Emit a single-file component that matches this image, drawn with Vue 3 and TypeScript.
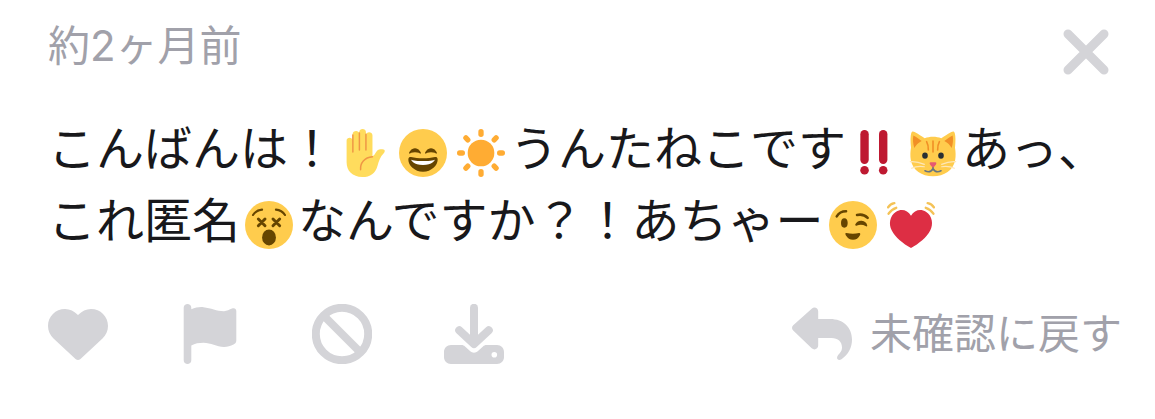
<script setup lang="ts">
import { ref } from 'vue'

type EmojiName = 'hand' | 'smile' | 'sun' | 'bangbang' | 'cat' | 'dizzy' | 'wink' | 'heartbeat'

interface Part {
  text?: string
  emoji?: EmojiName
  label?: string
}

const parts: Part[] = [
  { text: 'こんばんは！' },
  { emoji: 'hand', label: '✋' },
  { emoji: 'smile', label: '😄' },
  { emoji: 'sun', label: '☀️' },
  { text: 'うんたねこです' },
  { emoji: 'bangbang', label: '‼️' },
  { emoji: 'cat', label: '🐱' },
  { text: 'あっ、' },
  { text: 'これ匿名' },
  { emoji: 'dizzy', label: '😵' },
  { text: 'なんですか？！あちゃー' },
  { emoji: 'wink', label: '😉' },
  { emoji: 'heartbeat', label: '💓' },
]

const sunAngles = [0, 45, 90, 135, 180, 225, 270, 315]
const visible = ref(true)
</script>

<template>
  <article v-if="visible" class="card">
    <header class="header">
      <time class="time">約2ヶ月前</time>
      <button class="close" type="button" aria-label="閉じる" @click="visible = false">
        <svg viewBox="0 0 48 48" class="close-icon">
          <path d="M6 6L42 42M42 6L6 42" class="cross" />
        </svg>
      </button>
    </header>

    <p class="message">
      <template v-for="(part, i) in parts" :key="i"
        ><span v-if="part.text">{{ part.text }}</span
        ><svg v-else class="emoji" viewBox="0 0 36 36" role="img" :aria-label="part.label">
          <g v-if="part.emoji === 'hand'">
            <path
              fill="#FFDC5D"
              d="M4.2 8.6C4.2 5.800 8.700 5.800 8.700 8.600V4C8.700 .800 13.700 .800 13.700 3.600V2.300C13.700 -.700 18.700 -.700 18.700 2.300V4.500C18.700 1.700 23.600 1.700 23.600 4.600V20.500C24.800 19.800 25.700 18.300 26.500 17C27.600 15.300 29.300 15.200 31 15.200C33.200 15.200 33.300 17 31.900 18.300C29.500 20.500 28.400 24 27.400 27.500C25.800 33.300 22 36 16 36C8.500 36 4.200 31.500 4.200 25z"
            />
            <path
              d="M8.900 4.500V17.200M13.800 3V15.800M18.700 4V15.800M14.700 30.500C14.300 25.500 17.500 21.300 23.600 20.800"
              fill="none"
              stroke="#EF9645"
              stroke-width="1.100"
              stroke-linecap="round"
            />
          </g>
          <g v-else-if="part.emoji === 'smile'">
            <circle cx="18" cy="18" r="18" fill="#FFCC4D" />
            <path
              fill="#664500"
              d="M28.457 17.797c-.06-.135-1.499-3.297-4.457-3.297-2.957 0-4.397 3.162-4.457 3.297-.092.207-.032.449.145.591.175.142.426.147.61.014.012-.009 1.262-.902 3.702-.902 2.426 0 3.674.881 3.702.901.088.066.194.099.298.099.11 0 .221-.037.312-.109.177-.142.238-.386.145-.594zm-12 0c-.06-.135-1.499-3.297-4.457-3.297-2.957 0-4.397 3.162-4.457 3.297-.092.207-.032.449.144.591.176.142.427.147.61.014.013-.009 1.262-.902 3.703-.902 2.426 0 3.674.881 3.702.901.09.066.195.099.298.099.11 0 .221-.037.312-.109.178-.142.237-.386.145-.594zM18 22c-3.623 0-6.027-.422-9-1-.679-.131-2 0-2 2 0 4 4.595 9 11 9 6.404 0 11-5 11-9 0-2-1.321-2.132-2-2-2.973.578-5.377 1-9 1z"
            />
            <path fill="#fff" d="M9 23s3 1 9 1 9-1 9-1-2 4-9 4-9-4-9-4z" />
          </g>
          <g v-else-if="part.emoji === 'sun'" fill="#FFAC33">
            <circle cx="18" cy="18" r="10" />
            <rect
              v-for="a in sunAngles"
              :key="a"
              x="16"
              y="0"
              width="4"
              height="6"
              rx="2"
              :transform="`rotate(${a} 18 18)`"
            />
          </g>
          <g v-else-if="part.emoji === 'bangbang'" fill="#BE1931">
            <rect x="7" y=".800" width="6.300" height="25.400" rx="3.100" />
            <rect x="21" y=".800" width="6.300" height="25.400" rx="3.100" />
            <circle cx="10.150" cy="31" r="3.200" />
            <circle cx="24.150" cy="31" r="3.200" />
          </g>
          <g v-else-if="part.emoji === 'cat'">
            <path
              fill="#FFCC4D"
              d="M1.500 14C1 9 1 5.500 1.700 3C2 1.700 3 1.500 4.200 2.200C7 3.700 9.700 5.500 11.800 7C15.500 5.500 20.500 5.500 24.200 7C26.300 5.500 29 3.700 31.800 2.200C33 1.500 34 1.700 34.300 3C35 5.500 35 9 34.500 14C35 17 35.200 20 34.600 23.500C33.200 31 26.500 35.500 18 35.500S2.800 31 1.400 23.500C.800 20 1 17 1.500 14z"
            />
            <path
              fill="#F18F26"
              d="M3.300 4.800C5.500 6 8 7.600 9.500 9C6.800 10.500 5.300 12 4 14.200C3 11 2.700 7.300 3.300 4.800zM32.700 4.800C30.500 6 28 7.600 26.500 9C29.200 10.500 30.700 12 32 14.200C33 11 33.300 7.300 32.700 4.800z"
            />
            <path
              d="M13.200 9.500C14.300 11.500 14.600 13.500 14.500 15.800M18 9V17.300M22.800 9.500C21.700 11.500 21.400 13.500 21.500 15.800"
              fill="none"
              stroke="#F18F26"
              stroke-width="1.200"
              stroke-linecap="round"
            />
            <ellipse cx="12" cy="20" rx="2.100" ry="2.300" fill="#292F33" />
            <ellipse cx="24" cy="20" rx="2.100" ry="2.300" fill="#292F33" />
            <path
              d="M1 24.500C4.500 24.200 8 25 11.500 26.500M2 29.500C5 28 8 27.700 11.500 28.300M35 24.500C31.500 24.200 28 25 24.500 26.500M34 29.500C31 28 28 27.700 24.500 28.300"
              fill="none"
              stroke="#FEE7B8"
              stroke-width=".900"
              stroke-linecap="round"
            />
            <path
              d="M12 31.300C14.500 32.600 16.800 31.800 18 29.800C19.200 31.800 21.500 32.600 24 31.300M18 27V30"
              fill="none"
              stroke="#67757F"
              stroke-width="1.200"
              stroke-linecap="round"
            />
            <path
              fill="#E75A70"
              d="M16.300 25H19.700C20.800 25 20.700 26 20.100 26.800L18.700 28.500C18.200 29 17.800 29 17.300 28.500L15.900 26.800C15.300 26 15.200 25 16.300 25z"
            />
          </g>
          <g v-else-if="part.emoji === 'dizzy'">
            <circle cx="18" cy="18" r="18" fill="#FFCC4D" />
            <ellipse cx="18" cy="27.300" rx="5.200" ry="6" fill="#664500" />
            <path
              d="M10 13.500L15 18.500M15 13.500L10 18.500M21 13.500L26 18.500M26 13.500L21 18.500"
              stroke="#664500"
              stroke-width="2.200"
              stroke-linecap="round"
            />
            <path
              d="M6 10.500C7.500 8.200 9.800 6.800 12.800 6.500M30 10.500C28.500 8.200 26.200 6.800 23.200 6.500"
              fill="none"
              stroke="#664500"
              stroke-width="1.600"
              stroke-linecap="round"
            />
          </g>
          <g v-else-if="part.emoji === 'wink'">
            <circle cx="18" cy="18" r="18" fill="#FFCC4D" />
            <ellipse cx="11.500" cy="16.500" rx="2.500" ry="3.500" fill="#664500" />
            <path
              fill="#664500"
              d="M19.700 17.700C20.500 15.800 22.300 14.700 24.500 14.900C26.800 15.100 28.200 16.400 28.700 18.300C28.700 19.200 28 19.200 27.400 18.700C25.500 17.600 23.200 17.400 21 18.300C20.200 18.700 19.500 18.400 19.700 17.700zM13 24C16.500 24.800 19.500 24.800 22.500 24C23.500 23.800 23.700 24.800 23.200 25.600C22 27.900 20.300 29 18 29S14 27.900 12.600 25.600C12.100 24.600 12.100 23.800 13 24z"
            />
            <path
              d="M5.800 11.500C7.300 9 9.700 7.700 12.800 7.700M21 10.500C24 9.800 27 10.600 29 12.700"
              fill="none"
              stroke="#664500"
              stroke-width="1.900"
              stroke-linecap="round"
            />
          </g>
          <g v-else>
            <path
              fill="#DD2E44"
              d="M18 11C15.500 6.500 10.500 5.700 6.800 8C1.800 11.200 1.200 17.500 3.500 22C6.300 27.500 12 32 18 35.300C24 32 29.700 27.500 32.500 22C34.800 17.500 34.200 11.200 29.200 8C25.500 5.700 20.500 6.500 18 11z"
            />
            <path
              d="M.800 4.700C1.900 2.900 3.300 1.900 5.500 1.600M1.200 9.500C2.700 7.200 4.400 5.900 6.900 5.100M35.200 4.700C34.100 2.900 32.700 1.900 30.500 1.600M34.800 9.500C33.300 7.200 31.600 5.900 29.100 5.100"
              fill="none"
              stroke="#F4C256"
              stroke-width="1.800"
              stroke-linecap="round"
            />
          </g></svg
      ></template>
    </p>

    <footer class="footer">
      <div class="actions">
        <button type="button" class="action" aria-label="いいね">
          <svg viewBox="0 0 60 60" class="icon">
            <path
              d="M30 11C26 7 22 5 17 5C7.500 5 0 12.500 0 22C0 27 2 31 5.500 34.500L27.800 55.200C29.200 56.300 30.800 56.300 32.200 55.200L54.500 34.500C58 31 60 27 60 22C60 12.500 52.500 5 43 5C38 5 34 7 30 11z"
            />
          </svg>
        </button>
        <button type="button" class="action" aria-label="通報">
          <svg viewBox="0 0 60 60" class="icon">
            <path
              d="M3.700 3.800C3.700 -1.200 11.300 -1.200 11.300 3.800V5.200C15.500 3.500 19.500 2.800 23.500 3.200C31 4 37 7.300 44 7.200C46.800 7 49.500 5.500 52 4.500C54.500 3.500 56.300 4.800 56.300 7V36.500C56.300 38.500 55.300 39.700 53.500 40.500C50.500 42 47.500 43 44 43C36.500 43 31 38.800 23.500 38.800C19 38.800 15 39.500 11.300 41.500V56.200C11.300 61.200 3.700 61.200 3.700 56.200z"
            />
          </svg>
        </button>
        <button type="button" class="action" aria-label="ブロック">
          <svg viewBox="0 0 60 60" class="icon">
            <circle cx="30" cy="30" r="26.200" class="ring" />
            <path d="M12.500 12.500L47.500 47.500" class="ring" />
          </svg>
        </button>
        <button type="button" class="action" aria-label="保存">
          <svg viewBox="0 0 60 60" class="icon">
            <path
              fill-rule="evenodd"
              d="M7 41H17.500C19 41 20 41.500 21 42.500L26 47C28.500 49.300 31.500 49.300 34 47L39 42.500C40 41.500 41 41 42.500 41H53C57 41 60 44 60 48V53C60 57 57 60 53 60H7C3 60 0 57 0 53V48C0 44 3 41 7 41zM50.300 47.900A2.800 2.800 0 1 0 50.300 53.500A2.800 2.800 0 1 0 50.300 47.900z"
            />
            <path d="M30 3.800V39M15.200 26.200L30 40L44.800 26.200" class="line" />
          </svg>
        </button>
      </div>
      <button type="button" class="restore">
        <svg viewBox="0 0 60 60" class="icon" aria-hidden="true">
          <path
            d="M1.200 21.300L19.700 4.700C22.300 2.400 26.200 4 26.200 7.500V15H38C51.500 15 60 23.500 60 35.500C60 43.500 56.500 50.500 49.500 55.200C46.500 57.200 44 55 45.500 52C46.800 49.700 50 48 50 43.500C50 37.800 46 34 39.500 34H26.200V41.500C26.200 45 22.300 46.600 19.700 44.300L1.200 26.500C-.400 25 -.400 22.800 1.200 21.300z"
          />
        </svg>
        <span class="restore-label">未確認に戻す</span>
      </button>
    </footer>
  </article>
</template>

<style>
body {
  margin: 0;
  background: #fff;
}
</style>

<style scoped>
.card {
  box-sizing: border-box;
  padding: 16px 33px 48px 48px;
  font-family: 'Noto Sans CJK JP', 'Noto Sans', sans-serif;
  color: #18181b;
}

button {
  padding: 0;
  border: 0;
  background: none;
  font: inherit;
  cursor: pointer;
}

svg {
  display: block;
}

.header {
  display: flex;
  align-items: center;
  justify-content: space-between;
  padding-right: 12px;
  min-height: 72px;
}

.time {
  padding-bottom: 12px;
  font-family: Inter, 'Noto Sans CJK JP', sans-serif;
  font-size: 42px;
  line-height: 60px;
  color: #a1a1aa;
}

.close-icon {
  width: 48px;
  height: 48px;
}

.message {
  margin: 21px 0 51px;
  font-size: 48px;
  line-height: 72px;
}

.emoji {
  display: inline-block;
  width: 48px;
  height: 48px;
  margin: 0 5px;
  vertical-align: -11px;
}

.footer {
  display: flex;
  align-items: center;
  justify-content: space-between;
}

.actions {
  display: flex;
  gap: 72px;
}

.icon {
  width: 60px;
  height: 60px;
  fill: #d4d4d8;
}

.line,
.cross {
  fill: none;
  stroke: #d4d4d8;
  stroke-width: 8px;
  stroke-linecap: round;
  stroke-linejoin: round;
}

.cross {
  stroke-width: 9px;
}

.ring {
  fill: none;
  stroke: #d4d4d8;
  stroke-width: 8px;
}

.restore {
  display: flex;
  align-items: center;
  gap: 18px;
  font-size: 42px;
  white-space: nowrap;
  color: #a1a1aa;
}

.restore-label {
  padding-bottom: 6px;
  line-height: 54px;
}
</style>
